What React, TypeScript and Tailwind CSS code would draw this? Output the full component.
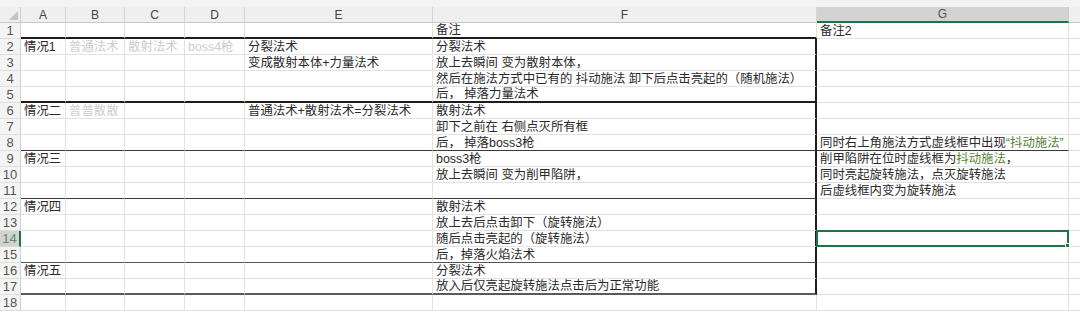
import React from "react";

type Seg = { t: string; c?: "light" | "green" };
type Row = Partial<Record<"A" | "B" | "C" | "D" | "E" | "F" | "G", Seg[]>>;

const s = (t: string): Seg[] => [{ t }];
const l = (t: string): Seg[] => [{ t, c: "light" }];

const rows: Row[] = [
  { F: s("备注"), G: s("备注2") },
  { A: s("情况1"), B: l("普通法术"), C: l("散射法术"), D: l("boss4枪"), E: s("分裂法术"), F: s("分裂法术") },
  { E: s("变成散射本体+力量法术"), F: s("放上去瞬间 变为散射本体，") },
  { F: s("然后在施法方式中已有的 抖动施法 卸下后点击亮起的（随机施法）") },
  { F: s("后， 掉落力量法术") },
  { A: s("情况二"), B: l("普普散散"), E: s("普通法术+散射法术=分裂法术"), F: s("散射法术") },
  { F: s("卸下之前在 右侧点灭所有框") },
  {
    F: s("后， 掉落boss3枪"),
    G: [{ t: "同时右上角施法方式虚线框中出现" }, { t: "“抖动施法”", c: "green" }],
  },
  {
    A: s("情况三"),
    F: s("boss3枪"),
    G: [{ t: "削甲陷阱在位时虚线框为" }, { t: "抖动施法", c: "green" }, { t: "，" }],
  },
  { F: s("放上去瞬间 变为削甲陷阱，"), G: s("同时亮起旋转施法，点灭旋转施法") },
  { G: s("后虚线框内变为旋转施法") },
  { A: s("情况四"), F: s("散射法术") },
  { F: s("放上去后点击卸下（旋转施法）") },
  { F: s("随后点击亮起的（旋转施法）") },
  { F: s("后，掉落火焰法术") },
  { A: s("情况五"), F: s("分裂法术") },
  { F: s("放入后仅亮起旋转施法点击后为正常功能") },
  {},
];

const cols = ["A", "B", "C", "D", "E", "F", "G"] as const;

function bottomClass(r: number, col: string): string {
  if (col === "G") {
    if (r === 8) return "border-b border-b-[#3a3a3a]";
    return "border-b border-b-[#e2e2e2]";
  }
  if (r === 1 || r === 5) return "border-b-2 border-b-[#1c1c1c]";
  if (r === 8 || r === 11) return "border-b border-b-[#3a3a3a]";
  if (r === 15) return "border-b border-b-[#555555]";
  if (r === 17) return "border-b-2 border-b-[#5a5a5a]";
  return "border-b border-b-[#e2e2e2]";
}

function rightClass(r: number, col: string): string {
  if (col === "F" && r >= 2 && r <= 17) return "border-r-2 border-r-[#1c1c1c]";
  return "border-r border-r-[#e2e2e2]";
}

function Text({ segs }: { segs?: Seg[] }) {
  if (!segs) return null;
  return (
    <span className="relative z-10 whitespace-nowrap pl-[3px] leading-[14px]">
      {segs.map((g, i) => (
        <span
          key={i}
          className={
            g.c === "light" ? "text-[#cdcdcd]" : g.c === "green" ? "text-[#548235]" : "text-[#2a2a2a]"
          }
        >
          {g.t}
        </span>
      ))}
    </span>
  );
}

export default function App() {
  return (
    <div
      className="w-[1080px] h-[312px] overflow-hidden bg-white"
      style={{ fontFamily: '"Liberation Sans", "Noto Sans CJK SC", sans-serif' }}
    >
      <div className="h-[7px] bg-[#f3f3f3]" />
      <div className="grid grid-cols-[21px_45px_59px_60px_60px_188px_384px_252px_11px] auto-rows-[16px]">
        {/* header row */}
        <div className="relative bg-[#efefef] border-r border-r-[#d0d0d0] border-b border-b-[#c8c8c8]">
          <svg className="absolute right-[2px] bottom-[2px]" width="9" height="9" viewBox="0 0 9 9">
            <polygon points="9,0 9,9 0,9" fill="#c4c4c4" />
          </svg>
        </div>
        {cols.map((c) => (
          <div
            key={c}
            className={
              c === "G"
                ? "flex items-center justify-center bg-[#d3d3d3] border-r border-r-[#c8c8c8] border-b-2 border-b-[#217346] text-[12px] text-[#3f5f4c]"
                : "flex items-center justify-center bg-[#efefef] border-r border-r-[#d6d6d6] border-b border-b-[#c8c8c8] text-[12px] text-[#444444]"
            }
          >
            {c}
          </div>
        ))}
        <div className="bg-[#efefef] border-b border-b-[#c8c8c8]" />

        {rows.map((row, idx) => {
          const r = idx + 1;
          return (
            <React.Fragment key={r}>
              <div
                className={
                  r === 14
                    ? "flex items-center justify-center bg-[#d3d3d3] border-r-2 border-r-[#217346] border-b border-b-[#d6d6d6] text-[13px] text-[#5d8a72]"
                    : "flex items-center justify-center bg-[#f4f4f4] border-r border-r-[#d0d0d0] border-b border-b-[#dedede] text-[13px] text-[#555555]"
                }
              >
                {r}
              </div>
              {cols.map((c) => (
                <div
                  key={c}
                  className={`relative flex items-center text-[12.4px] ${rightClass(r, c)} ${bottomClass(r, c)}`}
                >
                  <Text segs={row[c]} />
                  {c === "G" && r === 14 && (
                    <div className="absolute -left-[1px] -top-[1px] -right-[1px] -bottom-[1px] border-2 border-[#217346] z-20">
                      <div className="absolute -right-[3px] -bottom-[3px] w-[5px] h-[5px] bg-[#217346] border border-white" />
                    </div>
                  )}
                </div>
              ))}
              <div className="border-b border-b-[#e2e2e2]" />
            </React.Fragment>
          );
        })}
      </div>
    </div>
  );
}
